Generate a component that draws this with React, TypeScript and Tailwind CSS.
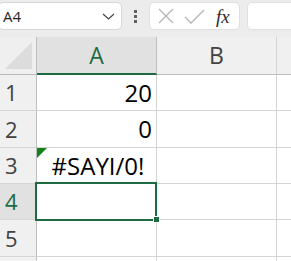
import React from "react";

const font = { fontFamily: '"Open Sans", "Noto Sans", sans-serif' };

function RowHeader({ n, h, selected }: { n?: number; h: string; selected?: boolean }) {
  return (
    <div
      className={`${h} w-[37px] shrink-0 border-r border-b border-r-[#bdbdbd] border-b-[#d4d4d4] flex items-center pl-[5px] text-[22px] ${
        selected ? "bg-[#e1e1e1] text-[#1e6b42]" : "bg-[#f0f0f0] text-[#424242]"
      }`}
    >
      {n}
    </div>
  );
}

function Row({
  n,
  h,
  a,
  align = "right",
  selected,
  error,
}: {
  n?: number;
  h: string;
  a?: string;
  align?: "right" | "center";
  selected?: boolean;
  error?: boolean;
}) {
  return (
    <div className="flex">
      <RowHeader n={n} h={h} selected={selected} />
      <div
        className={`${h} relative w-[120px] shrink-0 border-r border-b border-[#d4d4d4] bg-white flex items-center text-[24px] text-black ${
          align === "right" ? "justify-end pr-[4px]" : "justify-center pl-[3px]"
        }`}
      >
        {error && (
          <div className="absolute left-0 top-0 w-0 h-0 border-t-[10px] border-r-[10px] border-t-[#13821a] border-r-transparent" />
        )}
        {a}
      </div>
      <div className={`${h} w-[120px] shrink-0 border-r border-b border-[#d4d4d4] bg-white`} />
      <div className={`${h} flex-1 border-b border-[#d4d4d4] bg-white`} />
    </div>
  );
}

export default function App() {
  return (
    <div className="w-[291px] h-[261px] overflow-hidden bg-white relative" style={font}>
      {/* Toolbar */}
      <div className="h-[37px] bg-[#ececec] flex items-start pt-[2px]">
        <div className="ml-[-2px] w-[124px] h-[28px] rounded-[5px] bg-white border border-[#d6d6d6] flex items-center pl-[4px] pr-[6px]">
          <span className="text-[15px] text-[#262626]">A4</span>
          <svg className="ml-auto" width="13" height="7" viewBox="0 0 13 7">
            <path d="M1 1 L6.5 6 L12 1" fill="none" stroke="#444" strokeWidth="1.2" />
          </svg>
        </div>
        <div className="w-[27px] h-[28px] flex flex-col items-center justify-center gap-[2px]">
          <div className="w-[3px] h-[3px] bg-[#616161]" />
          <div className="w-[3px] h-[3px] bg-[#616161]" />
          <div className="w-[3px] h-[3px] bg-[#616161]" />
        </div>
        <div className="w-[91px] h-[28px] rounded-[5px] bg-white border border-[#e0e0e0] flex items-center pl-[8px]">
          <svg width="16" height="16" viewBox="0 0 16 16">
            <path d="M1 1 L15 15 M15 1 L1 15" fill="none" stroke="#b4b4b4" strokeWidth="1.3" />
          </svg>
          <svg className="ml-[10px]" width="21" height="15" viewBox="0 0 21 15">
            <path d="M1 8 L7 14 L20 1" fill="none" stroke="#b4b4b4" strokeWidth="1.3" />
          </svg>
          <span
            className="ml-[11px] text-[19px] italic text-[#2b2b2b] leading-none"
            style={{ fontFamily: '"Liberation Serif", "DejaVu Serif", serif' }}
          >
            fx
          </span>
        </div>
        <div className="ml-[7px] flex-1 mr-[-6px] h-[28px] rounded-[5px] bg-white border border-[#e0e0e0]" />
      </div>

      {/* Column headers */}
      <div className="flex h-[38px]">
        <div className="w-[37px] shrink-0 bg-[#efefef] border-r border-b border-[#bdbdbd] flex items-center justify-center">
          <svg width="29" height="29" viewBox="0 0 29 29">
            <path d="M28 1 L28 28 L1 28 Z" fill="#dcdcdc" />
          </svg>
        </div>
        <div className="w-[120px] shrink-0 bg-[#e1e1e1] border-r border-r-[#bdbdbd] border-b-2 border-b-[#1e6b42] flex items-center justify-center text-[23px] text-[#1e6b42]">
          A
        </div>
        <div className="w-[120px] shrink-0 bg-[#f0f0f0] border-r border-b border-[#bdbdbd] border-r-[#d4d4d4] flex items-center justify-center text-[23px] text-[#424242]">
          B
        </div>
        <div className="flex-1 bg-[#f0f0f0] border-b border-[#bdbdbd]" />
      </div>

      {/* Rows */}
      <Row n={1} h="h-[36px]" a="20" />
      <Row n={2} h="h-[37px]" a="0" />
      <Row n={3} h="h-[36px]" a="#SAYI/0!" align="center" error />
      <Row n={4} h="h-[36px]" selected />
      <Row n={5} h="h-[37px]" />
      <Row h="h-[36px]" />

      {/* Selection */}
      <div className="absolute left-[35px] top-[182px] w-[122px] h-[39px] border-2 border-[#1e6b42] pointer-events-none" />
      <div className="absolute left-[153px] top-[216px] w-[7px] h-[7px] bg-[#1e6b42] border border-white" />
    </div>
  );
}
